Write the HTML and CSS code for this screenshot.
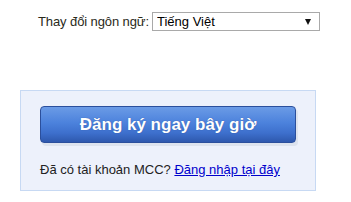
FILE: index.html
```
<!DOCTYPE html>
<html lang="vi">
<head>
<meta charset="utf-8">
<link rel="stylesheet" href="styles.css">
</head>
<body>
<div class="lang">
  <span class="lang-label">Thay đổi ngôn ngữ:</span>
  <div class="select-wrap">
    <select class="lang-select"><option>Tiếng Việt</option></select>
    <span class="arrow"></span>
  </div>
</div>
<div class="panel">
  <button class="signup">Đăng ký ngay bây giờ</button>
  <p class="login">Đã có tài khoản MCC? <a href="#">Đăng nhập tại đây</a></p>
</div>
</body>
</html>
```
FILE: styles.css
```
body {
  margin: 0;
  font-family: Arial, "Liberation Sans", sans-serif;
  font-size: 13px;
  color: #222;
  background: #fff;
}
.lang {
  display: flex;
  align-items: center;
  padding: 12px 0 0 38px;
  gap: 3px;
}
.lang-label {
  font-size: 13px;
  letter-spacing: -0.1px;
  color: #2a2a1a;
}
.select-wrap {
  position: relative;
  width: 168px;
  height: 19px;
}
.lang-select {
  -webkit-appearance: none;
  appearance: none;
  box-sizing: border-box;
  width: 168px;
  height: 19px;
  margin: 0;
  border: 1px solid #a9a9a9;
  border-radius: 0;
  background: #fff;
  font-family: Arial, "Liberation Sans", sans-serif;
  font-size: 13px;
  color: #000;
  padding: 0 0 0 4px;
}
.arrow {
  position: absolute;
  right: 9px;
  top: 7px;
  width: 0;
  height: 0;
  border-left: 3.5px solid transparent;
  border-right: 3.5px solid transparent;
  border-top: 6px solid #111;
}
.panel {
  box-sizing: border-box;
  margin: 59px 0 0 20px;
  width: 296px;
  height: 101px;
  border: 1px solid #c7d9f3;
  background: #edf1fb;
  padding: 15px 0 0 19px;
}
.signup {
  display: block;
  box-sizing: border-box;
  width: 256px;
  height: 37px;
  margin: 0;
  border: 1px solid #2b4f9c;
  border-radius: 4px;
  background: linear-gradient(#6b9be6 0%, #4c82dc 45%, #3d6fcc 75%, #2e58ad 100%);
  box-shadow: 2px 3px 0 #dde3ee;
  color: #fff;
  font-family: Arial, "Liberation Sans", sans-serif;
  font-weight: bold;
  font-size: 17px;
  text-shadow: 0 0 1px #2b4f9c;
  padding: 0;
  cursor: pointer;
}
.login {
  margin: 19px 0 0 0;
  font-size: 13px;
  color: #222;
}
.login a {
  color: #0000cc;
  text-decoration: underline;
}
```
